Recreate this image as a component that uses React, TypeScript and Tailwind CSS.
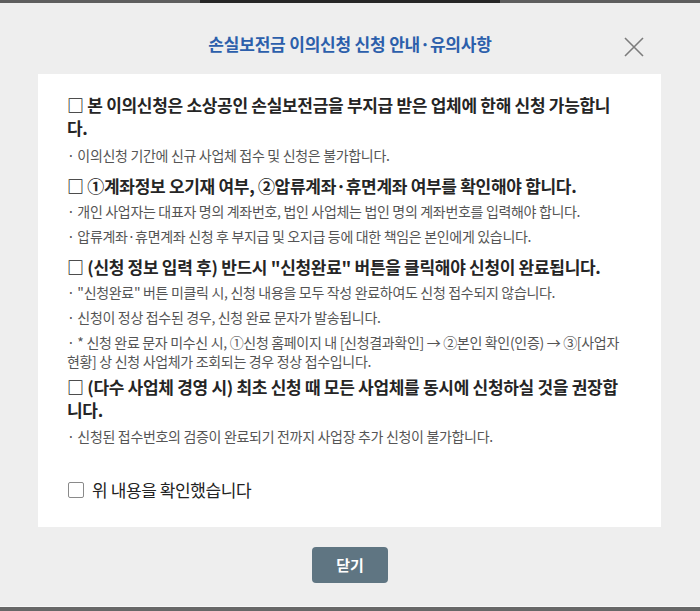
import React from 'react';

type Section = {
  title: string;
  notes: string[];
  gap: string;
  notesGap: string;
};

const sections: Section[] = [
  {
    title: '□ 본 이의신청은 소상공인 손실보전금을 부지급 받은 업체에 한해 신청 가능합니다.',
    notes: ['· 이의신청 기간에 신규 사업체 접수 및 신청은 불가합니다.'],
    gap: 'mt-0',
    notesGap: 'mt-[7px]',
  },
  {
    title: '□ ①계좌정보 오기재 여부, ②압류계좌·휴면계좌 여부를 확인해야 합니다.',
    notes: [
      '· 개인 사업자는 대표자 명의 계좌번호, 법인 사업체는 법인 명의 계좌번호를 입력해야 합니다.',
      '· 압류계좌·휴면계좌 신청 후 부지급 및 오지급 등에 대한 책임은 본인에게 있습니다.',
    ],
    gap: 'mt-[9px]',
    notesGap: 'mt-[5px]',
  },
  {
    title: '□ (신청 정보 입력 후) 반드시 "신청완료" 버튼을 클릭해야 신청이 완료됩니다.',
    notes: [
      '· "신청완료" 버튼 미클릭 시, 신청 내용을 모두 작성 완료하여도 신청 접수되지 않습니다.',
      '· 신청이 정상 접수된 경우, 신청 완료 문자가 발송됩니다.',
      '· * 신청 완료 문자 미수신 시, ①신청 홈페이지 내 [신청결과확인] → ②본인 확인(인증) → ③[사업자 현황] 상 신청 사업체가 조회되는 경우 정상 접수입니다.',
    ],
    gap: 'mt-[9px]',
    notesGap: 'mt-[5px]',
  },
  {
    title: '□ (다수 사업체 경영 시) 최초 신청 때 모든 사업체를 동시에 신청하실 것을 권장합니다.',
    notes: ['· 신청된 접수번호의 검증이 완료되기 전까지 사업장 추가 신청이 불가합니다.'],
    gap: 'mt-[4px]',
    notesGap: 'mt-[6px]',
  },
];

function CloseIcon() {
  return (
    <svg width="22" height="22" viewBox="0 0 22 22" fill="none">
      <path d="M2 2 L20 20 M20 2 L2 20" stroke="#7c7c7c" strokeWidth="1.6" />
    </svg>
  );
}

export default function App() {
  const [checked, setChecked] = React.useState(false);

  return (
    <div
      className="h-[611px] bg-[#eeeeee] flex flex-col"
      style={{ fontFamily: '"Noto Sans CJK KR", "Noto Sans", sans-serif' }}
    >
      <div className="h-[3px] bg-[#5e5e5e] flex justify-center">
        <div className="w-[300px] h-[3px] bg-[#262626]" />
      </div>

      <header className="relative h-[71px] pt-[11px] flex items-center justify-center">
        <h1 className="text-[17px] font-bold text-[#2c5fab] tracking-[-0.2px]">
          손실보전금 이의신청 신청 안내·유의사항
        </h1>
        <button className="absolute right-[55px] top-[33px]" aria-label="닫기">
          <CloseIcon />
        </button>
      </header>

      <div className="ml-[38px] mr-[39px] bg-white pl-[29px] pr-[35px] pt-[19px] pb-[25px]">
        {sections.map((s, i) => (
          <section key={i} className={s.gap}>
            <p className="text-[17px] leading-[23px] font-semibold text-[#252525] tracking-[-0.3px]">
              {s.title}
            </p>
            <ul className={`${s.notesGap} flex flex-col gap-[6px]`}>
              {s.notes.map((n, j) => (
                <li key={j} className="text-[14px] leading-[19px] text-[#555555] tracking-[-0.32px]">
                  {n}
                </li>
              ))}
            </ul>
          </section>
        ))}

        <label className="mt-[32px] h-[24px] flex items-center gap-[8px] cursor-pointer">
          <input
            type="checkbox"
            checked={checked}
            onChange={(e) => setChecked(e.target.checked)}
            className="appearance-none w-[16px] h-[16px] ml-[1px] border border-[#8a8a8a] rounded-[2px] bg-white checked:bg-[#5f7582]"
          />
          <span className="text-[17px] leading-[24px] text-[#222222] tracking-[-0.4px]">
            위 내용을 확인했습니다
          </span>
        </label>
      </div>

      <div className="pt-[20px] flex justify-center">
        <button className="w-[76px] h-[36px] rounded-[4px] bg-[#5f7582] text-white text-[15px] font-bold">
          닫기
        </button>
      </div>

      <div className="flex-1" />
      <div className="h-[1px] bg-[#f7f7f7]" />
      <div className="h-[4px] bg-[#676767]" />
    </div>
  );
}
